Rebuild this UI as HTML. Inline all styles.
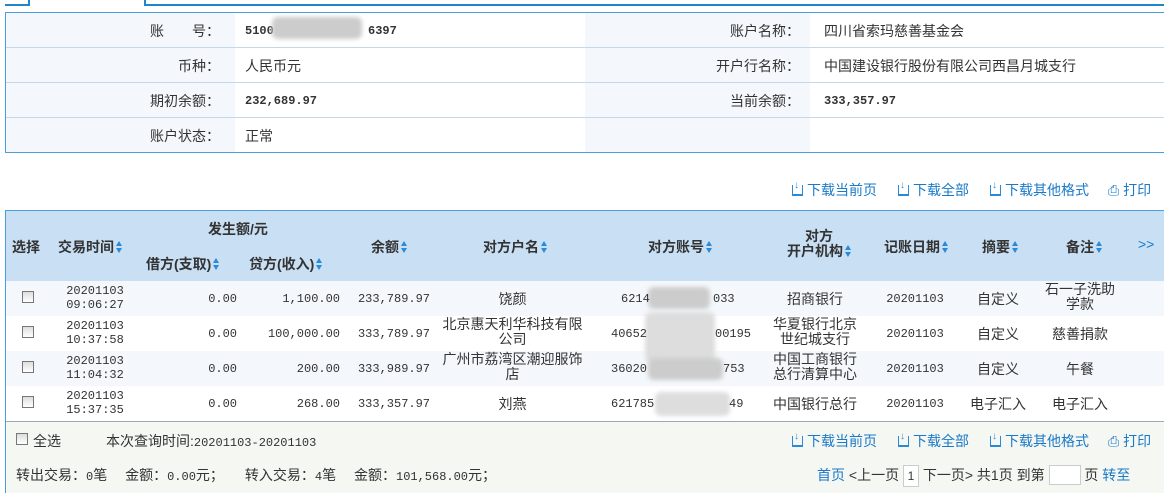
<!DOCTYPE html>
<html><head><meta charset="utf-8"><style>
*{margin:0;padding:0;box-sizing:border-box}
body{width:1164px;height:493px;overflow:hidden;background:#fff;font-family:"Liberation Sans","Noto Sans CJK SC",sans-serif;font-size:14px;color:#333;position:relative}
.a{position:absolute;white-space:nowrap}
.mono{font-family:"Liberation Mono","Noto Sans CJK SC",monospace;font-size:12px}
.c{text-align:center}.r{text-align:right}
.blue{color:#1a7ac8}
.s{display:inline-block;width:6px;height:12px;vertical-align:-1px;margin-left:2px;position:relative}
.s:before{content:"";position:absolute;left:0;top:0;border:3px solid transparent;border-bottom:5px solid #2a8ad8;border-top:0}
.s:after{content:"";position:absolute;left:0;top:7px;border:3px solid transparent;border-top:5px solid #2a8ad8;border-bottom:0}
.cb{position:absolute;width:12px;height:12px;border:1px solid #777;background:linear-gradient(#ddd,#fff)}
.b{font-weight:bold}
.blur{position:absolute;background:#ccc;filter:blur(2px);border-radius:6px}
.dl{display:inline-block;width:11px;height:11px;border-bottom:2px solid #2a8ad8;border-left:1px solid #2a8ad8;border-right:1px solid #2a8ad8;vertical-align:-1px;margin-right:4px;position:relative;border-top:0}
.dl:after{content:"↓";position:absolute;left:1px;top:-5px;font-size:10px;color:#2a8ad8}
</style></head><body>
<div class="a" style="left:5px;top:4px;width:25px;height:2px;background:#1f86cc"></div>
<div class="a" style="left:28px;top:0;width:2px;height:6px;background:#1f86cc"></div>
<div class="a" style="left:144px;top:4px;width:1020px;height:2px;background:#1f86cc"></div>
<div class="a" style="left:144px;top:0;width:2px;height:6px;background:#1f86cc"></div>
<div class="a" style="left:5px;top:12px;width:1160px;height:141px;border:1px solid #4a9edd;background:#fff"></div>
<div class="a" style="left:6px;top:13px;width:229px;height:139px;background:#f4f8fc"></div>
<div class="a" style="left:585px;top:13px;width:225px;height:139px;background:#f4f8fc"></div>
<div class="a" style="left:6px;top:47px;width:1158px;height:1px;background:#c4d8ea"></div>
<div class="a" style="left:6px;top:82px;width:1158px;height:1px;background:#c4d8ea"></div>
<div class="a" style="left:6px;top:117px;width:1158px;height:1px;background:#c4d8ea"></div>
<div class="a r" style="left:100px;top:21px;width:120px">账　　号：</div>
<div class="a mono b" style="left:245px;top:24px">5100</div>
<div class="blur" style="left:272px;top:17px;width:90px;height:22px"></div>
<div class="a mono b" style="left:368px;top:24px">6397</div>
<div class="a r" style="left:100px;top:56px;width:120px">币种：</div>
<div class="a" style="left:245px;top:56px">人民币元</div>
<div class="a r" style="left:100px;top:91px;width:120px">期初余额：</div>
<div class="a mono b" style="left:245px;top:94px">232,689.97</div>
<div class="a r" style="left:100px;top:126px;width:120px">账户状态：</div>
<div class="a" style="left:245px;top:126px">正常</div>
<div class="a r" style="left:660px;top:21px;width:140px">账户名称：</div>
<div class="a" style="left:824px;top:21px">四川省索玛慈善基金会</div>
<div class="a r" style="left:660px;top:56px;width:140px">开户行名称：</div>
<div class="a" style="left:824px;top:56px">中国建设银行股份有限公司西昌月城支行</div>
<div class="a r" style="left:660px;top:91px;width:140px">当前余额：</div>
<div class="a mono b" style="left:824px;top:94px">333,357.97</div>
<div class="a blue" style="left:792px;top:180px"><span class="dl"></span>下载当前页</div>
<div class="a blue" style="left:898px;top:180px"><span class="dl"></span>下载全部</div>
<div class="a blue" style="left:990px;top:180px"><span class="dl"></span>下载其他格式</div>
<div class="a blue" style="left:1108px;top:180px">⎙ 打印</div>
<div class="a" style="left:5px;top:210px;width:1160px;height:283px;border:1px solid #4a9edd;border-bottom:none;background:#fff"></div>
<div class="a" style="left:6px;top:211px;width:1158px;height:70px;background:#c8dff4"></div>
<div class="a" style="left:6px;top:281px;width:1158px;height:35px;background:#f4f8fc"></div>
<div class="a" style="left:6px;top:351px;width:1158px;height:35px;background:#f4f8fc"></div>
<div class="a" style="left:6px;top:421px;width:1158px;height:72px;background:#f5f7f2;border-top:1px solid #9ab"></div>
<div class="a b" style="left:12px;top:237px">选择</div>
<div class="a b" style="left:58px;top:237px">交易时间<span class="s"></span></div>
<div class="a b" style="left:208px;top:219px">发生额/元</div>
<div class="a b" style="left:146px;top:254px">借方(支取)<span class="s"></span></div>
<div class="a b" style="left:249px;top:254px">贷方(收入)<span class="s"></span></div>
<div class="a b" style="left:371px;top:237px">余额<span class="s"></span></div>
<div class="a b" style="left:483px;top:237px">对方户名<span class="s"></span></div>
<div class="a b" style="left:648px;top:237px">对方账号<span class="s"></span></div>
<div class="a b c" style="left:776px;top:229px;width:86px;line-height:15px">对方<br>开户机构<span class="s"></span></div>
<div class="a b" style="left:884px;top:237px">记账日期<span class="s"></span></div>
<div class="a b" style="left:982px;top:237px">摘要<span class="s"></span></div>
<div class="a b" style="left:1066px;top:237px">备注<span class="s"></span></div>
<div class="a blue" style="left:1138px;top:236px;font-size:14px">&gt;&gt;</div>
<div class="cb" style="left:22px;top:291px"></div>
<div class="cb" style="left:22px;top:326px"></div>
<div class="cb" style="left:22px;top:361px"></div>
<div class="cb" style="left:22px;top:396px"></div>
<div class="a mono c" style="left:55px;top:284px;width:80px;line-height:14px">20201103<br>09:06:27</div>
<div class="a mono c" style="left:55px;top:319px;width:80px;line-height:14px">20201103<br>10:37:58</div>
<div class="a mono c" style="left:55px;top:354px;width:80px;line-height:14px">20201103<br>11:04:32</div>
<div class="a mono c" style="left:55px;top:389px;width:80px;line-height:14px">20201103<br>15:37:35</div>
<div class="a mono r" style="left:150px;top:292px;width:87px">0.00</div>
<div class="a mono r" style="left:150px;top:327px;width:87px">0.00</div>
<div class="a mono r" style="left:150px;top:362px;width:87px">0.00</div>
<div class="a mono r" style="left:150px;top:397px;width:87px">0.00</div>
<div class="a mono r" style="left:240px;top:292px;width:100px">1,100.00</div>
<div class="a mono r" style="left:240px;top:327px;width:100px">100,000.00</div>
<div class="a mono r" style="left:240px;top:362px;width:100px">200.00</div>
<div class="a mono r" style="left:240px;top:397px;width:100px">268.00</div>
<div class="a mono r" style="left:340px;top:292px;width:90px">233,789.97</div>
<div class="a mono r" style="left:340px;top:327px;width:90px">333,789.97</div>
<div class="a mono r" style="left:340px;top:362px;width:90px">333,989.97</div>
<div class="a mono r" style="left:340px;top:397px;width:90px">333,357.97</div>
<div class="a c" style="left:440px;top:289px;width:145px">饶颜</div>
<div class="a c" style="left:440px;top:317px;width:145px;line-height:15px">北京惠天利华科技有限<br>公司</div>
<div class="a c" style="left:440px;top:352px;width:145px;line-height:15px">广州市荔湾区潮迎服饰<br>店</div>
<div class="a c" style="left:440px;top:394px;width:145px">刘燕</div>
<div class="blur" style="left:648px;top:287px;width:62px;height:22px"></div>
<div class="blur" style="left:645px;top:312px;width:70px;height:50px;background:#ddd"></div>
<div class="blur" style="left:648px;top:358px;width:75px;height:22px"></div>
<div class="blur" style="left:655px;top:392px;width:75px;height:24px;background:#ddd"></div>
<div class="a mono" style="left:621px;top:292px">6214</div><div class="a mono" style="left:713px;top:292px">033</div>
<div class="a mono" style="left:611px;top:327px">40652</div><div class="a mono" style="left:715px;top:327px">00195</div>
<div class="a mono" style="left:611px;top:362px">36020</div><div class="a mono" style="left:723px;top:362px">753</div>
<div class="a mono" style="left:611px;top:397px">621785</div><div class="a mono" style="left:729px;top:397px">49</div>
<div class="a c" style="left:770px;top:289px;width:90px">招商银行</div>
<div class="a c" style="left:765px;top:317px;width:100px;line-height:15px">华夏银行北京<br>世纪城支行</div>
<div class="a c" style="left:765px;top:352px;width:100px;line-height:15px">中国工商银行<br>总行清算中心</div>
<div class="a c" style="left:760px;top:394px;width:110px">中国银行总行</div>
<div class="a mono c" style="left:875px;top:292px;width:80px">20201103</div>
<div class="a mono c" style="left:875px;top:327px;width:80px">20201103</div>
<div class="a mono c" style="left:875px;top:362px;width:80px">20201103</div>
<div class="a mono c" style="left:875px;top:397px;width:80px">20201103</div>
<div class="a c" style="left:958px;top:289px;width:80px">自定义</div>
<div class="a c" style="left:958px;top:324px;width:80px">自定义</div>
<div class="a c" style="left:958px;top:359px;width:80px">自定义</div>
<div class="a c" style="left:958px;top:394px;width:80px">电子汇入</div>
<div class="a c" style="left:1035px;top:282px;width:90px;line-height:15px">石一子洗助<br>学款</div>
<div class="a c" style="left:1035px;top:324px;width:90px">慈善捐款</div>
<div class="a c" style="left:1035px;top:359px;width:90px">午餐</div>
<div class="a c" style="left:1035px;top:394px;width:90px">电子汇入</div>
<div class="cb" style="left:16px;top:433px"></div>
<div class="a" style="left:33px;top:431px">全选</div>
<div class="a" style="left:106px;top:431px">本次查询时间:<span class="mono">20201103-20201103</span></div>
<div class="a blue" style="left:792px;top:431px"><span class="dl"></span>下载当前页</div>
<div class="a blue" style="left:898px;top:431px"><span class="dl"></span>下载全部</div>
<div class="a blue" style="left:990px;top:431px"><span class="dl"></span>下载其他格式</div>
<div class="a blue" style="left:1108px;top:431px">⎙ 打印</div>
<div class="a" style="left:16px;top:465px">转出交易：<span class="mono">0</span>笔　 金额：<span class="mono">0.00</span>元；　　转入交易：<span class="mono">4</span>笔　 金额：<span class="mono">101,568.00</span>元；</div>
<div class="a" style="left:817px;top:465px"><span class="blue">首页</span> &lt;上一页 <span style="display:inline-block;border:1px solid #ccc;background:#fff;width:16px;height:22px;text-align:center;line-height:20px;font-size:12px">1</span> 下一页&gt; 共1页 到第 <span style="display:inline-block;border:1px solid #ccc;background:#fff;width:32px;height:20px;vertical-align:-5px"></span> 页 <span class="blue">转至</span></div>
</body></html>
